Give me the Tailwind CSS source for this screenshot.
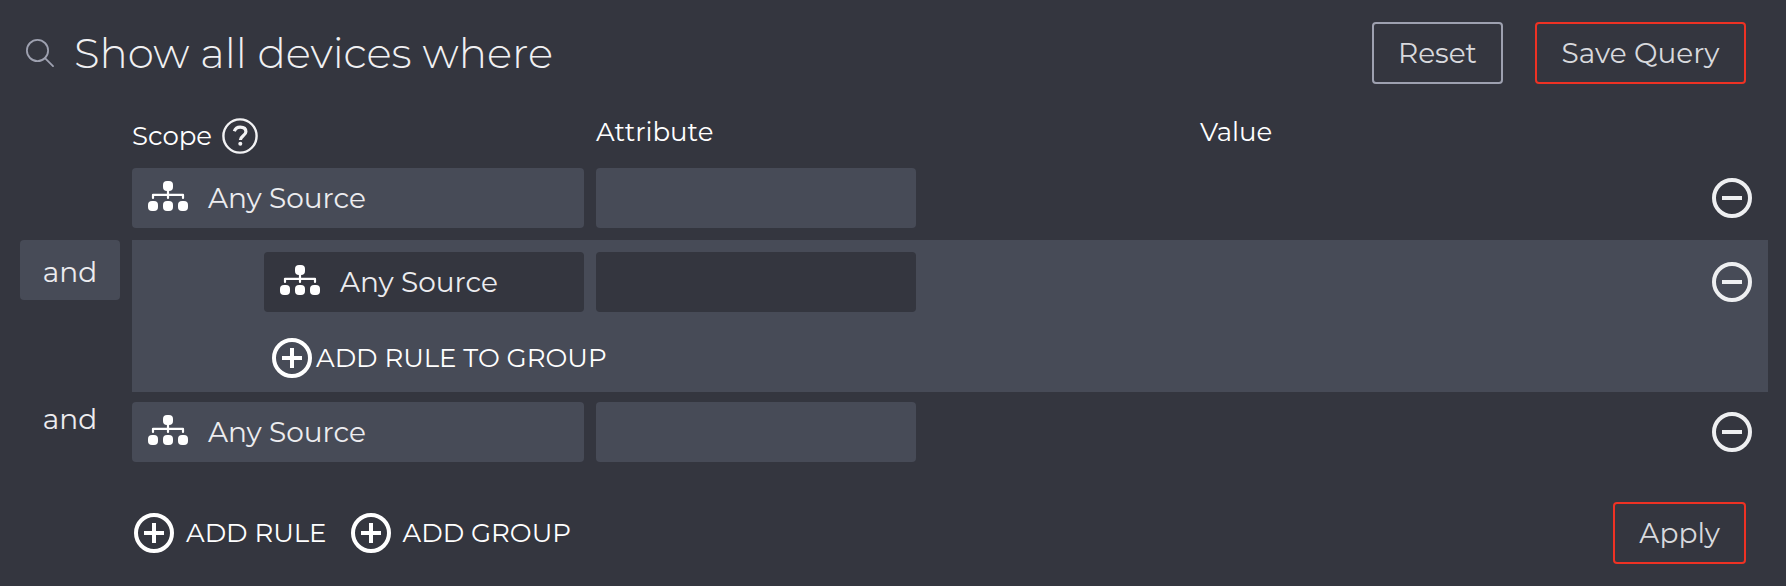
<!DOCTYPE html>
<html lang="en">
<head>
<meta charset="utf-8">
<meta name="viewport" content="width=device-width, initial-scale=1">
<title>Device query</title>
<script src="https://cdn.jsdelivr.net/npm/@tailwindcss/browser@4"></script>
</head>
<body class="min-h-screen bg-[#34363f] font-['Montserrat','Inter',sans-serif] text-[#ececef]">
<svg class="hidden" aria-hidden="true">
  <symbol id="tree" viewBox="0 0 40 30">
    <g fill="#fff"><rect x="15" y="0" width="10" height="10" rx="4"/><rect x="0" y="20" width="10" height="10" rx="4"/><rect x="15" y="20" width="10" height="10" rx="4"/><rect x="30" y="20" width="10" height="10" rx="4"/></g>
    <path d="M20 9v8M5 17v-3.2h30V17" fill="none" stroke="#fff" stroke-width="2.2" stroke-linejoin="round" stroke-linecap="round"/>
  </symbol>
  <symbol id="plus" viewBox="0 0 40 40">
    <circle cx="20" cy="20" r="18" fill="none" stroke="#fff" stroke-width="4"/>
    <path d="M10 20h20M20 10v20" stroke="#fff" stroke-width="4"/>
  </symbol>
  <symbol id="minus" viewBox="0 0 40 40">
    <circle cx="20" cy="20" r="18" fill="none" stroke="#eeeff1" stroke-width="4"/>
    <path d="M10 20h20" stroke="#eeeff1" stroke-width="4"/>
  </symbol>
</svg>
<main class="flex flex-col">
  <header class="flex items-center pt-[22px] pr-10 pl-[26px]">
    <svg class="size-7 shrink-0" viewBox="0 0 28 28" fill="none" stroke="#9ea1b0" stroke-width="1.8" stroke-linecap="round"><circle cx="11.5" cy="11.5" r="10.6"/><path d="M19 19.2l8 8"/></svg>
    <h1 class="ml-5 text-[42px] leading-[62px] font-light text-[#f0f0f2]">Show all devices where</h1>
    <div class="ml-auto flex gap-8 text-[28px] text-[#d8d9dd]">
      <button type="button" class="h-[62px] min-w-[131px] rounded border-2 border-[#9ea1b0] px-6">Reset</button>
      <button type="button" class="h-[62px] min-w-[211px] rounded border-2 border-[#ee3224] px-6">Save Query</button>
    </div>
  </header>

  <section class="mt-8 grid grid-cols-[100px_1fr] gap-x-3 pr-[18px] pl-5 text-[28px]">
    <div class="col-start-2 grid h-[52px] grid-cols-[452px_592fr_568fr] gap-x-3 text-[26px] leading-8 text-white">
      <div class="flex h-10 items-center gap-2.5">
        <span>Scope</span>
        <button type="button" aria-label="Help"><svg class="size-9" viewBox="0 0 36 36" fill="none" stroke="#f2f2f4"><circle cx="18" cy="18" r="16.6" stroke-width="2.4"/><path d="M12.3 13.2c1-2.800 3-4.100 5.900-4.100 3.500 0 5.700 1.800 5.700 4.600 0 3.800-5.500 4.300-5.500 8.300" stroke-width="3.200"/><circle cx="18.300" cy="25.800" r="2" fill="#f2f2f4" stroke="none"/></svg></button>
      </div>
      <span>Attribute</span>
      <span>Value</span>
    </div>

    <div class="col-start-2 grid grid-cols-[452px_592fr_568fr] items-center gap-x-3">
      <button type="button" class="flex h-[60px] items-center gap-5 rounded bg-[#474b57] px-4"><svg class="mb-1 h-[30px] w-10"><use href="#tree"/></svg>Any Source</button>
      <input type="text" aria-label="Attribute" class="h-[60px] w-80 rounded bg-[#474b57] px-4">
      <button type="button" aria-label="Remove rule" class="mr-4 justify-self-end"><svg class="size-10"><use href="#minus"/></svg></button>
    </div>

    <button type="button" class="mt-3 h-[60px] rounded bg-[#474b57] pt-1">and</button>
    <div class="mt-3 bg-[#474b57] pt-3 pb-3.5">
      <div class="grid grid-cols-[452px_592fr_568fr] items-center gap-x-3">
        <button type="button" class="ml-[132px] flex h-[60px] items-center gap-5 rounded bg-[#34363f] px-4"><svg class="mb-1 h-[30px] w-10"><use href="#tree"/></svg>Any Source</button>
        <input type="text" aria-label="Group attribute" class="h-[60px] w-80 rounded bg-[#34363f] px-4">
        <button type="button" aria-label="Remove group rule" class="mr-4 justify-self-end"><svg class="size-10"><use href="#minus"/></svg></button>
      </div>
      <button type="button" class="mt-[26px] ml-[140px] flex items-center gap-1 text-[26px] text-white"><svg class="size-10"><use href="#plus"/></svg>ADD RULE TO GROUP</button>
    </div>

    <span class="mt-2.5 text-center leading-[34px]">and</span>
    <div class="mt-2.5 grid grid-cols-[452px_592fr_568fr] items-center gap-x-3">
      <button type="button" class="flex h-[60px] items-center gap-5 rounded bg-[#474b57] px-4"><svg class="mb-1 h-[30px] w-10"><use href="#tree"/></svg>Any Source</button>
      <input type="text" aria-label="Attribute" class="h-[60px] w-80 rounded bg-[#474b57] px-4">
      <button type="button" aria-label="Remove rule" class="mr-4 justify-self-end"><svg class="size-10"><use href="#minus"/></svg></button>
    </div>
  </section>

  <footer class="mt-10 flex items-center gap-6 pr-10 pl-[134px] text-[26px] text-white">
    <button type="button" class="flex items-center gap-3"><svg class="size-10"><use href="#plus"/></svg>ADD RULE</button>
    <button type="button" class="flex items-center gap-3"><svg class="size-10"><use href="#plus"/></svg>ADD GROUP</button>
    <button type="button" class="ml-auto h-[62px] rounded border-2 border-[#ee3224] px-6 text-[28px] text-[#d8d9dd]">Apply</button>
  </footer>
</main>
</body>
</html>
